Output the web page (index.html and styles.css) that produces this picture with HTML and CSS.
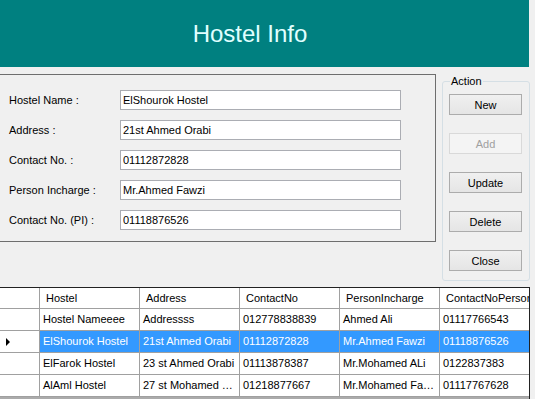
FILE: index.html
```html
<!DOCTYPE html>
<html lang="en">
<head>
    <meta charset="UTF-8">
    <title>Hostel Info</title>
    <link rel="stylesheet" href="styles.css">
</head>
<body>
    <div class="header">
        <h1 class="title">Hostel Info</h1>
    </div>

    <div class="top">
        <div class="info-box">
            <div class="field">
                <label>Hostel Name :</label>
                <input type="text" value="ElShourok Hostel">
            </div>
            <div class="field">
                <label>Address :</label>
                <input type="text" value="21st Ahmed Orabi">
            </div>
            <div class="field">
                <label>Contact No. :</label>
                <input type="text" value="01112872828">
            </div>
            <div class="field">
                <label>Person Incharge :</label>
                <input type="text" value="Mr.Ahmed Fawzi">
            </div>
            <div class="field">
                <label>Contact No. (PI) :</label>
                <input type="text" value="01118876526">
            </div>
        </div>

        <fieldset class="actions">
            <legend>Action</legend>
            <button class="btn">New</button>
            <button class="btn" disabled>Add</button>
            <button class="btn">Update</button>
            <button class="btn">Delete</button>
            <button class="btn">Close</button>
        </fieldset>
    </div>

    <div class="grid">
        <div class="row head">
            <div class="cell rh"></div>
            <div class="cell">Hostel</div>
            <div class="cell">Address</div>
            <div class="cell">ContactNo</div>
            <div class="cell">PersonIncharge</div>
            <div class="cell">ContactNoPerson</div>
        </div>
        <div class="row">
            <div class="cell rh"></div>
            <div class="cell">Hostel Nameeee</div>
            <div class="cell">Addressss</div>
            <div class="cell">012778838839</div>
            <div class="cell">Ahmed Ali</div>
            <div class="cell">01117766543</div>
        </div>
        <div class="row selected">
            <div class="cell rh"><span class="arrow"></span></div>
            <div class="cell">ElShourok Hostel</div>
            <div class="cell">21st Ahmed Orabi</div>
            <div class="cell">01112872828</div>
            <div class="cell">Mr.Ahmed Fawzi</div>
            <div class="cell">01118876526</div>
        </div>
        <div class="row">
            <div class="cell rh"></div>
            <div class="cell">ElFarok Hostel</div>
            <div class="cell">23 st Ahmed Orabi</div>
            <div class="cell">01113878387</div>
            <div class="cell">Mr.Mohamed ALi</div>
            <div class="cell">0122837383</div>
        </div>
        <div class="row">
            <div class="cell rh"></div>
            <div class="cell">AlAml Hostel</div>
            <div class="cell">27 st Mohamed …</div>
            <div class="cell">01218877667</div>
            <div class="cell">Mr.Mohamed Fa…</div>
            <div class="cell">01117767628</div>
        </div>
    </div>
</body>
</html>
```

FILE: styles.css
```css
body {
    margin: 0;
    width: 535px;
    height: 399px;
    overflow: hidden;
    background: #f0f0f0;
    font-family: "Liberation Sans", Tahoma, sans-serif;
    font-size: 11px;
    color: #000;
}

.header {
    width: 529px;
    height: 67px;
    background: #008080;
    display: flex;
    align-items: center;
    justify-content: center;
    padding-right: 29px;
    box-sizing: border-box;
}

.title {
    margin: 0;
    font-size: 24px;
    font-weight: normal;
    color: #e0ffff;
}

.top {
    display: flex;
    align-items: flex-start;
    margin-top: 7px;
}

.info-box {
    margin-left: -1px;
    width: 437px;
    height: 168px;
    border: 1px solid #6e6e6e;
    box-sizing: border-box;
    padding: 15px 0 0 9px;
}

.field {
    display: flex;
    align-items: center;
    height: 20px;
    margin-bottom: 10px;
}

.field label {
    width: 111px;
}

.field input {
    width: 281px;
    height: 20px;
    box-sizing: border-box;
    border: 1px solid #abadb3;
    padding: 0 2px;
    margin: 0;
    font: inherit;
    background: #fff;
    outline: none;
}

.actions {
    margin: 1px 0 0 6px;
    width: 88px;
    height: 206px;
    box-sizing: border-box;
    border: 1px solid #d5dfe5;
    border-radius: 3px;
    padding: 6px 0 0 6px;
    display: flex;
    flex-direction: column;
    align-items: flex-start;
}

.actions legend {
    padding: 0 1px;
    margin-left: 1px;
    line-height: 13px;
}

.btn {
    flex-shrink: 0;
    width: 73px;
    height: 21px;
    margin: 0 0 18px 0;
    padding: 0;
    font: inherit;
    color: #000;
    border: 1px solid #acacac;
    border-radius: 0;
    background: linear-gradient(#f0f0f0, #e5e5e5);
}

.btn:last-child {
    margin-bottom: 0;
}

.btn:disabled {
    color: #a0a0a0;
    border-color: #d9d9d9;
    background: #f4f4f4;
}

.grid {
    margin-top: 6px;
    width: 530px;
    height: 120px;
    overflow: hidden;
    border-top: 1px solid #222;
    border-right: 1px solid #222;
    box-sizing: border-box;
    background: #ababab;
}

.row {
    display: grid;
    grid-template-columns: 40px 100px 100px 100px 100px 100px;
    height: 22px;
    background: #fff;
}

.row.head {
    height: 21px;
}

.cell {
    border-right: 1px solid #a0a0a0;
    border-bottom: 1px solid #a0a0a0;
    box-sizing: border-box;
    padding-left: 3px;
    line-height: 21px;
    white-space: nowrap;
    overflow: hidden;
}

.head .cell {
    padding-left: 6px;
    line-height: 20px;
}

.selected .cell {
    background: #3399ff;
    color: #fff;
}

.selected .cell.rh {
    background: #fff;
}

.arrow {
    display: inline-block;
    margin: 7px 0 0 3px;
    width: 0;
    height: 0;
    border-left: 4px solid #000;
    border-top: 4px solid transparent;
    border-bottom: 4px solid transparent;
    vertical-align: top;
}
```
